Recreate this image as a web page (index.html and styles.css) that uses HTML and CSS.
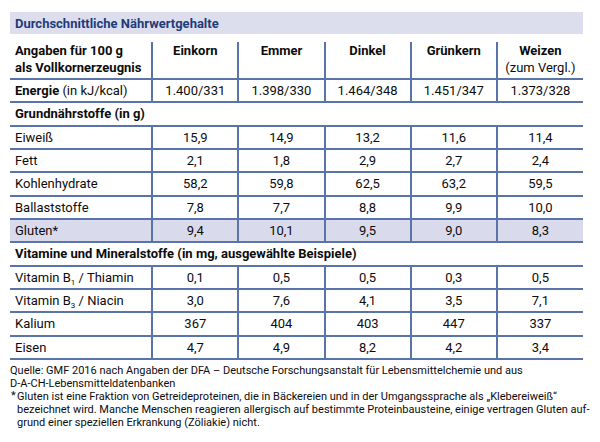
FILE: index.html
```html
<!DOCTYPE html>
<html lang="de">
<head>
<meta charset="utf-8">
<link rel="stylesheet" href="styles.css">
</head>
<body>
<div class="wrap">
  <div class="title">Durchschnittliche Nährwertgehalte</div>
  <table class="nt">
    <colgroup>
      <col class="c-label"><col class="c-val"><col class="c-val"><col class="c-val"><col class="c-val"><col class="c-val">
    </colgroup>
    <tr class="head">
      <th class="lbl">Angaben für 100 g<br>als Vollkornerzeugnis</th>
      <th>Einkorn</th>
      <th>Emmer</th>
      <th>Dinkel</th>
      <th>Grünkern</th>
      <th>Weizen<br><span class="note">(zum Vergl.)</span></th>
    </tr>
    <tr class="row">
      <td class="lbl"><b>Energie</b> (in kJ/kcal)</td>
      <td>1.400/331</td><td>1.398/330</td><td>1.464/348</td><td>1.451/347</td><td>1.373/328</td>
    </tr>
    <tr class="sec"><td colspan="6">Grundnährstoffe (in g)</td></tr>
    <tr class="row"><td class="lbl">Eiweiß</td><td>15,9</td><td>14,9</td><td>13,2</td><td>11,6</td><td>11,4</td></tr>
    <tr class="row"><td class="lbl">Fett</td><td>2,1</td><td>1,8</td><td>2,9</td><td>2,7</td><td>2,4</td></tr>
    <tr class="row"><td class="lbl">Kohlenhydrate</td><td>58,2</td><td>59,8</td><td>62,5</td><td>63,2</td><td>59,5</td></tr>
    <tr class="row"><td class="lbl">Ballaststoffe</td><td>7,8</td><td>7,7</td><td>8,8</td><td>9,9</td><td>10,0</td></tr>
    <tr class="row hl"><td class="lbl">Gluten*</td><td>9,4</td><td>10,1</td><td>9,5</td><td>9,0</td><td>8,3</td></tr>
    <tr class="sec"><td colspan="6">Vitamine und Mineralstoffe (in mg, ausgewählte Beispiele)</td></tr>
    <tr class="row"><td class="lbl">Vitamin B<sub>1</sub> / Thiamin</td><td>0,1</td><td>0,5</td><td>0,5</td><td>0,3</td><td>0,5</td></tr>
    <tr class="row"><td class="lbl">Vitamin B<sub>3</sub> / Niacin</td><td>3,0</td><td>7,6</td><td>4,1</td><td>3,5</td><td>7,1</td></tr>
    <tr class="row"><td class="lbl">Kalium</td><td>367</td><td>404</td><td>403</td><td>447</td><td>337</td></tr>
    <tr class="row"><td class="lbl">Eisen</td><td>4,7</td><td>4,9</td><td>8,2</td><td>4,2</td><td>3,4</td></tr>
  </table>
  <div class="foot">
    <p>Quelle: GMF 2016 nach Angaben der DFA – Deutsche Forschungsanstalt für Lebensmittelchemie und aus<br>D-A-CH-Lebensmitteldatenbanken</p>
    <p class="star"><span class="ast">*</span>Gluten ist eine Fraktion von Getreideproteinen, die in Bäckereien und in der Umgangssprache als „Klebereiweiß“<br>bezeichnet wird. Manche Menschen reagieren allergisch auf bestimmte Proteinbausteine, einige vertragen Gluten auf-<br>grund einer speziellen Erkrankung (Zöliakie) nicht.</p>
  </div>
</div>
</body>
</html>
```
FILE: styles.css
```css
html, body {
  margin: 0;
  padding: 0;
  background: #ffffff;
}
body {
  font-family: Roboto, "Liberation Sans", sans-serif;
  color: #0c0c0c;
}
.wrap {
  width: 573px;
  padding: 12px 0 0 10px;
}
.title {
  background: #dcdeee;
  color: #1f3b78;
  font-weight: 700;
  font-size: 13px;
  height: 22px;
  line-height: 23px;
  padding-left: 5px;
  margin-bottom: 8px;
}
.nt {
  width: 573px;
  border-collapse: collapse;
  table-layout: fixed;
  font-size: 13px;
}
.c-label { width: 142px; }
.c-val { width: 86px; }
.nt th, .nt td {
  padding: 0;
  text-align: center;
  vertical-align: middle;
}
.nt tr > * + * {
  border-left: 2px solid #5874a8;
}
.nt .lbl {
  text-align: left;
  padding-left: 5px;
}
.head th {
  font-weight: 700;
  height: 36px;
  vertical-align: top;
  line-height: 17px;
  padding-top: 0;
  border-bottom: 2px solid #5874a8;
}
.head .note {
  font-weight: 400;
  font-size: 13px;
}
.row td {
  height: 21.33px;
  border-bottom: 2px solid #5874a8;
}
.row.hl td {
  background: #d9dbed;
}
.sec td {
  height: 21.33px;
  font-weight: 700;
  text-align: left;
  padding-left: 5px;
  border-bottom: 2px solid #5874a8;
}
sub {
  font-size: 8px;
  vertical-align: -3px;
  line-height: 0;
}
.foot {
  font-size: 11px;
  line-height: 13px;
  margin-top: 4px;
  white-space: nowrap;
}
.foot p {
  margin: 0;
}
.foot .star {
  padding-left: 7px;
  position: relative;
}
.foot .ast {
  position: absolute;
  left: 1px;
  top: -1px;
}
```
